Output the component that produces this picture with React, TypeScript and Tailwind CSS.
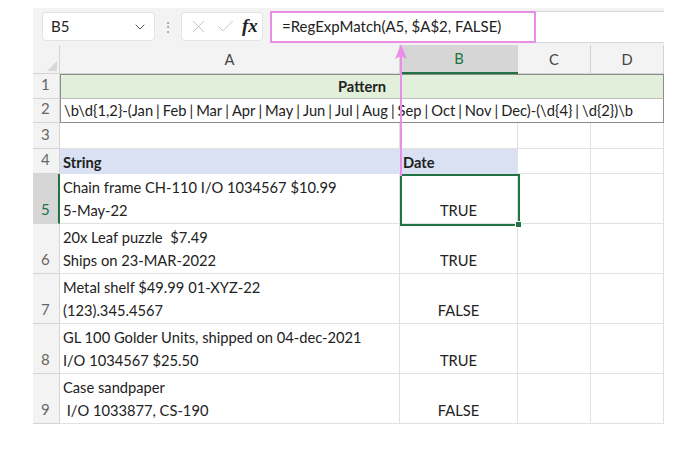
import { Check, ChevronDown, X } from "lucide-react";

const font = { fontFamily: "Lato, 'Liberation Sans', sans-serif" };

const rows = [
  ["Chain frame CH-110 I/O 1034567 $10.99", "5-May-22", "TRUE"],
  ["20x Leaf puzzle  $7.49", "Ships on 23-MAR-2022", "TRUE"],
  ["Metal shelf $49.99 01-XYZ-22", "(123).345.4567", "FALSE"],
  ["GL 100 Golder Units, shipped on 04-dec-2021", "I/O 1034567 $25.50", "TRUE"],
  ["Case sandpaper", " I/O 1033877, CS-190", "FALSE"],
];

const pattern = "\\b\\d{1,2}-(Jan|Feb|Mar|Apr|May|Jun|Jul|Aug|Sep|Oct|Nov|Dec)-(\\d{4}|\\d{2})\\b";

function RowHead({ n, h, active }: { n: number; h: string; active?: boolean }) {
  return (
    <div
      className={`${h} flex items-end pl-[8px] pb-[3px] border-r border-b border-[#d4d4d4] text-[15px] ${
        active ? "bg-[#d6d6d6] text-[#217346] border-r-2 border-r-[#217346]" : "bg-[#f3f3f3] text-[#666]"
      }`}
    >
      {n}
    </div>
  );
}

export default function App() {
  return (
    <div className="relative w-[700px] h-[450px] bg-white pt-[8px] pl-[33px] text-[#222]" style={font}>
      <div className="w-[631px]">
        {/* toolbar */}
        <div className="flex items-center h-[37px] bg-[#f3f3f3]">
          <div className="ml-[9px] w-[113px] h-[29px] flex items-center justify-between pl-[8px] pr-[6px] bg-white border border-[#e3e3e3] rounded">
            <span className="text-[15px]">B5</span>
            <ChevronDown size={16} strokeWidth={1.5} className="text-[#555]" />
          </div>
          <span className="w-[26px] text-center text-[#999] text-[14px]">⋮</span>
          <div className="w-[82px] h-[29px] flex items-center gap-[6px] pl-[6px] bg-white border border-[#e3e3e3] rounded">
            <X size={21} strokeWidth={1} className="text-[#bbb]" />
            <Check size={21} strokeWidth={1} className="text-[#bbb]" />
            <span className="text-[19px] italic font-bold" style={{ fontFamily: "'Liberation Serif', serif" }}>
              fx
            </span>
          </div>
          <div className="ml-[7px] flex-1 h-[32px] bg-white border-y border-[#d8d8d8]">
            <div className="w-[266px] h-[32px] -mt-px flex items-center pl-[10px] border-2 border-[#ea8ee8] text-[15px]">
              =RegExpMatch(A5, $A$2, FALSE)
            </div>
          </div>
        </div>

        {/* sheet */}
        <div className="grid grid-cols-[27px_340px_118px_73px_73px] text-[14.7px]">
          <div className="h-[29px] bg-[#f3f3f3] border-r border-b border-[#d4d4d4] flex items-end justify-end p-[2px]">
            <div className="w-0 h-0 border-l-[10px] border-l-transparent border-b-[10px] border-b-[#d8d8d8]" />
          </div>
          <div className="h-[29px] bg-[#f3f3f3] border-r border-b border-[#d4d4d4] flex items-center justify-center text-[#444]">A</div>
          <div className="h-[29px] bg-[#d6d6d6] border-b-2 border-[#217346] flex items-center justify-center text-[#217346]">B</div>
          <div className="h-[29px] bg-[#f3f3f3] border-r border-b border-[#d4d4d4] flex items-center justify-center text-[#444]">C</div>
          <div className="h-[29px] bg-[#f3f3f3] border-r border-b border-[#d4d4d4] flex items-center justify-center text-[#444]">D</div>

          <RowHead n={1} h="h-[25px]" />
          <div className="col-span-4 h-[25px] bg-[#e2efda] border-x border-t border-b border-[#8c8c8c] border-b-[#bdbdbd] flex items-center justify-center font-bold">
            Pattern
          </div>

          <RowHead n={2} h="h-[24px]" />
          <div className="col-span-4 h-[24px] border-x border-b border-[#8c8c8c] flex items-center pl-[3px] whitespace-nowrap">
            {pattern.split("|").map((part, i) => (
              <span key={i}>
                {i > 0 && <span className="mx-[3px]">|</span>}
                {part}
              </span>
            ))}
          </div>

          <RowHead n={3} h="h-[26px]" />
          <div className="h-[26px] border-r border-b border-[#e1e1e1]" />
          <div className="h-[26px] border-r border-b border-[#e1e1e1]" />
          <div className="h-[26px] border-r border-b border-[#e1e1e1]" />
          <div className="h-[26px] border-r border-b border-[#e1e1e1]" />

          <RowHead n={4} h="h-[25px]" />
          <div className="h-[25px] bg-[#d9e1f2] flex items-end pl-[3px] pb-[1px] font-bold">String</div>
          <div className="h-[25px] bg-[#d9e1f2] border-r border-[#e1e1e1] flex items-end pl-[3px] pb-[1px] font-bold">Date</div>
          <div className="h-[25px] border-r border-b border-[#e1e1e1]" />
          <div className="h-[25px] border-r border-b border-[#e1e1e1]" />

          {rows.map(([l1, l2, v], i) => (
            <div key={i} className="contents">
              <RowHead n={i + 5} h="h-[50px]" active={i === 0} />
              <div className="h-[50px] border-r border-b border-[#e1e1e1] flex flex-col justify-end pl-[3px] pb-[1px] leading-[23px] whitespace-pre">
                <span>{l1}</span>
                <span>{l2}</span>
              </div>
              <div className="h-[50px] border-r border-b border-[#e1e1e1] flex items-end justify-center pb-[1px] leading-[23px]">
                {v}
              </div>
              <div className="h-[50px] border-r border-b border-[#e1e1e1]" />
              <div className="h-[50px] border-r border-b border-[#e1e1e1]" />
            </div>
          ))}
        </div>
      </div>

      {/* selection on B5 */}
      <div className="absolute left-[400px] top-[174px] w-[120px] h-[52px] border-2 border-[#217346]" />
      <div className="absolute left-[515px] top-[221px] w-[7px] h-[7px] bg-[#217346] border border-white" />

      {/* pink arrow */}
      <svg className="absolute left-[393px] top-[42px]" width="16" height="134" viewBox="0 0 16 134">
        <line x1="8" y1="10" x2="8" y2="134" stroke="#ea8ee8" strokeWidth="2" />
        <polygon points="8,2 2,17 8,14 14,17" fill="#ea8ee8" />
      </svg>
    </div>
  );
}
